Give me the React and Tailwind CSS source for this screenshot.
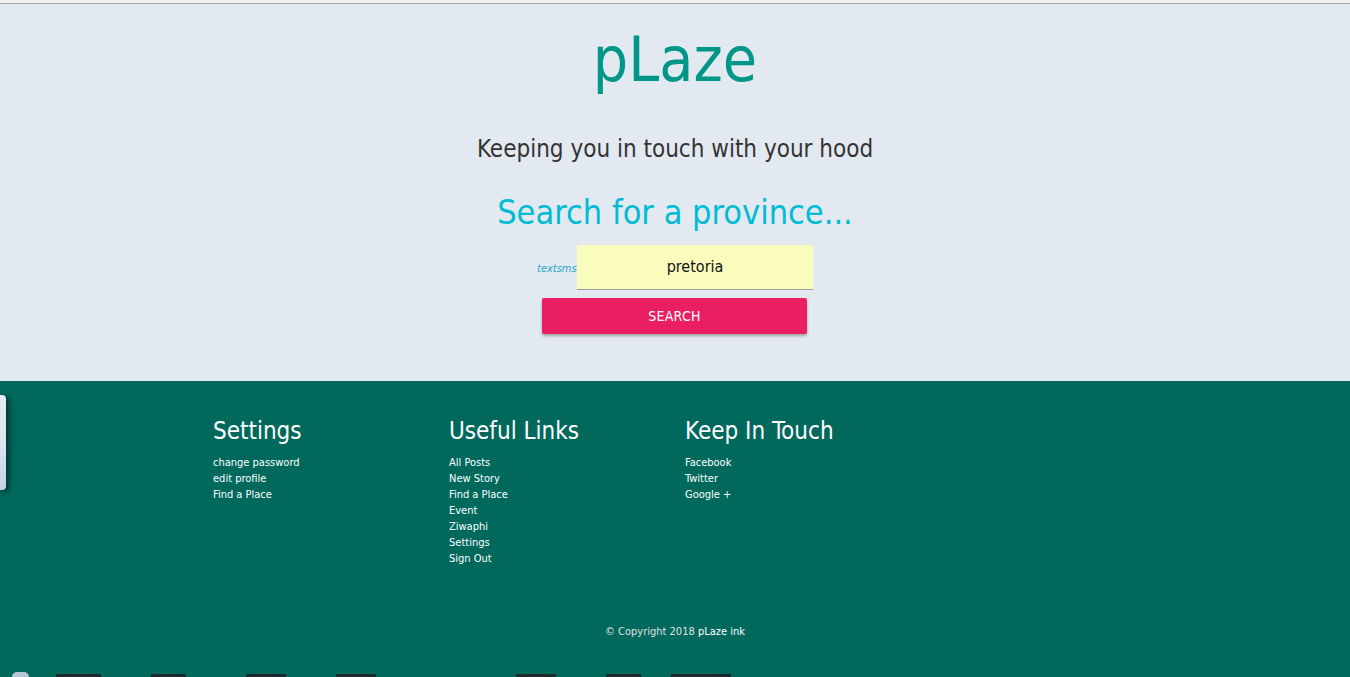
import React from "react";

const font = "font-['DejaVu_Sans_Condensed','DejaVu_Sans',sans-serif]";

function FooterCol({ title, links }) {
  return (
    <div className="w-[236px] px-[10.5px]">
      <h5 className="text-[24px] leading-[30px] text-white">{title}</h5>
      <ul className="mt-[9px] text-[11px] leading-[16px] text-white">
        {links.map((l) => (
          <li key={l}>{l}</li>
        ))}
      </ul>
    </div>
  );
}

export default function App() {
  return (
    <div className={`relative min-h-[677px] h-[677px] flex flex-col overflow-hidden ${font}`}>
      <div className="h-[4px] bg-[#f2f2f2] border-b border-[#a7a7a7]" />
      <main className="h-[377px] bg-[#e3e9f1] flex flex-col items-center">
        <h1 className="mt-[24px] text-[62px] leading-[64px] text-[#009688]">pLaze</h1>
        <h5 className="mt-[43px] text-[24px] leading-[28px] text-[#333333]">
          Keeping you in touch with your hood
        </h5>
        <h4 className="mt-[29px] text-[34px] leading-[40px] text-[#00bcd4]">
          Search for a province...
        </h4>
        <div className="mt-[13px] flex items-center">
          <i className="w-[40px] pr-[2px] text-right text-[11px] text-[#26a8c4] mt-[3px]">textsms</i>
          <div className="w-[236px] h-[45px] bg-[#fafcbd] border-b border-[#9e9e9e] flex items-center justify-center text-[16px] text-[#111]">
            pretoria
          </div>
        </div>
        <button className="mt-[8px] ml-[-1px] w-[265px] h-[36px] bg-[#e91e63] rounded-[2px] text-white text-[14px] tracking-[0.3px] shadow-[0_2px_3px_rgba(0,0,0,0.3)]">
          SEARCH
        </button>
      </main>
      <footer className="relative flex-1 bg-[#00695c] flex flex-col">
        <div className="w-[945px] mx-auto flex pt-[35px]">
          <FooterCol title="Settings" links={["change password", "edit profile", "Find a Place"]} />
          <FooterCol
            title="Useful Links"
            links={["All Posts", "New Story", "Find a Place", "Event", "Ziwaphi", "Settings", "Sign Out"]}
          />
          <FooterCol title="Keep In Touch" links={["Facebook", "Twitter", "Google +"]} />
        </div>
        <div className="mt-[57px] text-center text-[11px] text-[#e0e0e0]">
          © Copyright 2018 <span className="text-white">pLaze ink</span>
        </div>
        <div className="absolute left-0 top-[14px] w-[6px] h-[95px] rounded-r-[4px] bg-gradient-to-b from-[#e4ecf5] via-[#dde5f0] to-[#c3d1e3] shadow-[2px_2px_6px_rgba(0,0,0,0.7)]" />
        <div className="absolute left-0 right-0 bottom-0 h-[5px] flex items-end">
          <div className="ml-[12px] w-[17px] h-[5px] rounded-t-full bg-[#b9c6d4]" />
          <div className="ml-[27px] w-[45px] h-[3px] bg-[#1d2b2c]" />
          <div className="ml-[50px] w-[35px] h-[3px] bg-[#1d2b2c]" />
          <div className="ml-[60px] w-[40px] h-[3px] bg-[#1d2b2c]" />
          <div className="ml-[50px] w-[40px] h-[3px] bg-[#1d2b2c]" />
          <div className="ml-[140px] w-[40px] h-[3px] bg-[#1d2b2c]" />
          <div className="ml-[50px] w-[35px] h-[3px] bg-[#1d2b2c]" />
          <div className="ml-[30px] w-[60px] h-[3px] bg-[#1d2b2c]" />
        </div>
      </footer>
    </div>
  );
}
